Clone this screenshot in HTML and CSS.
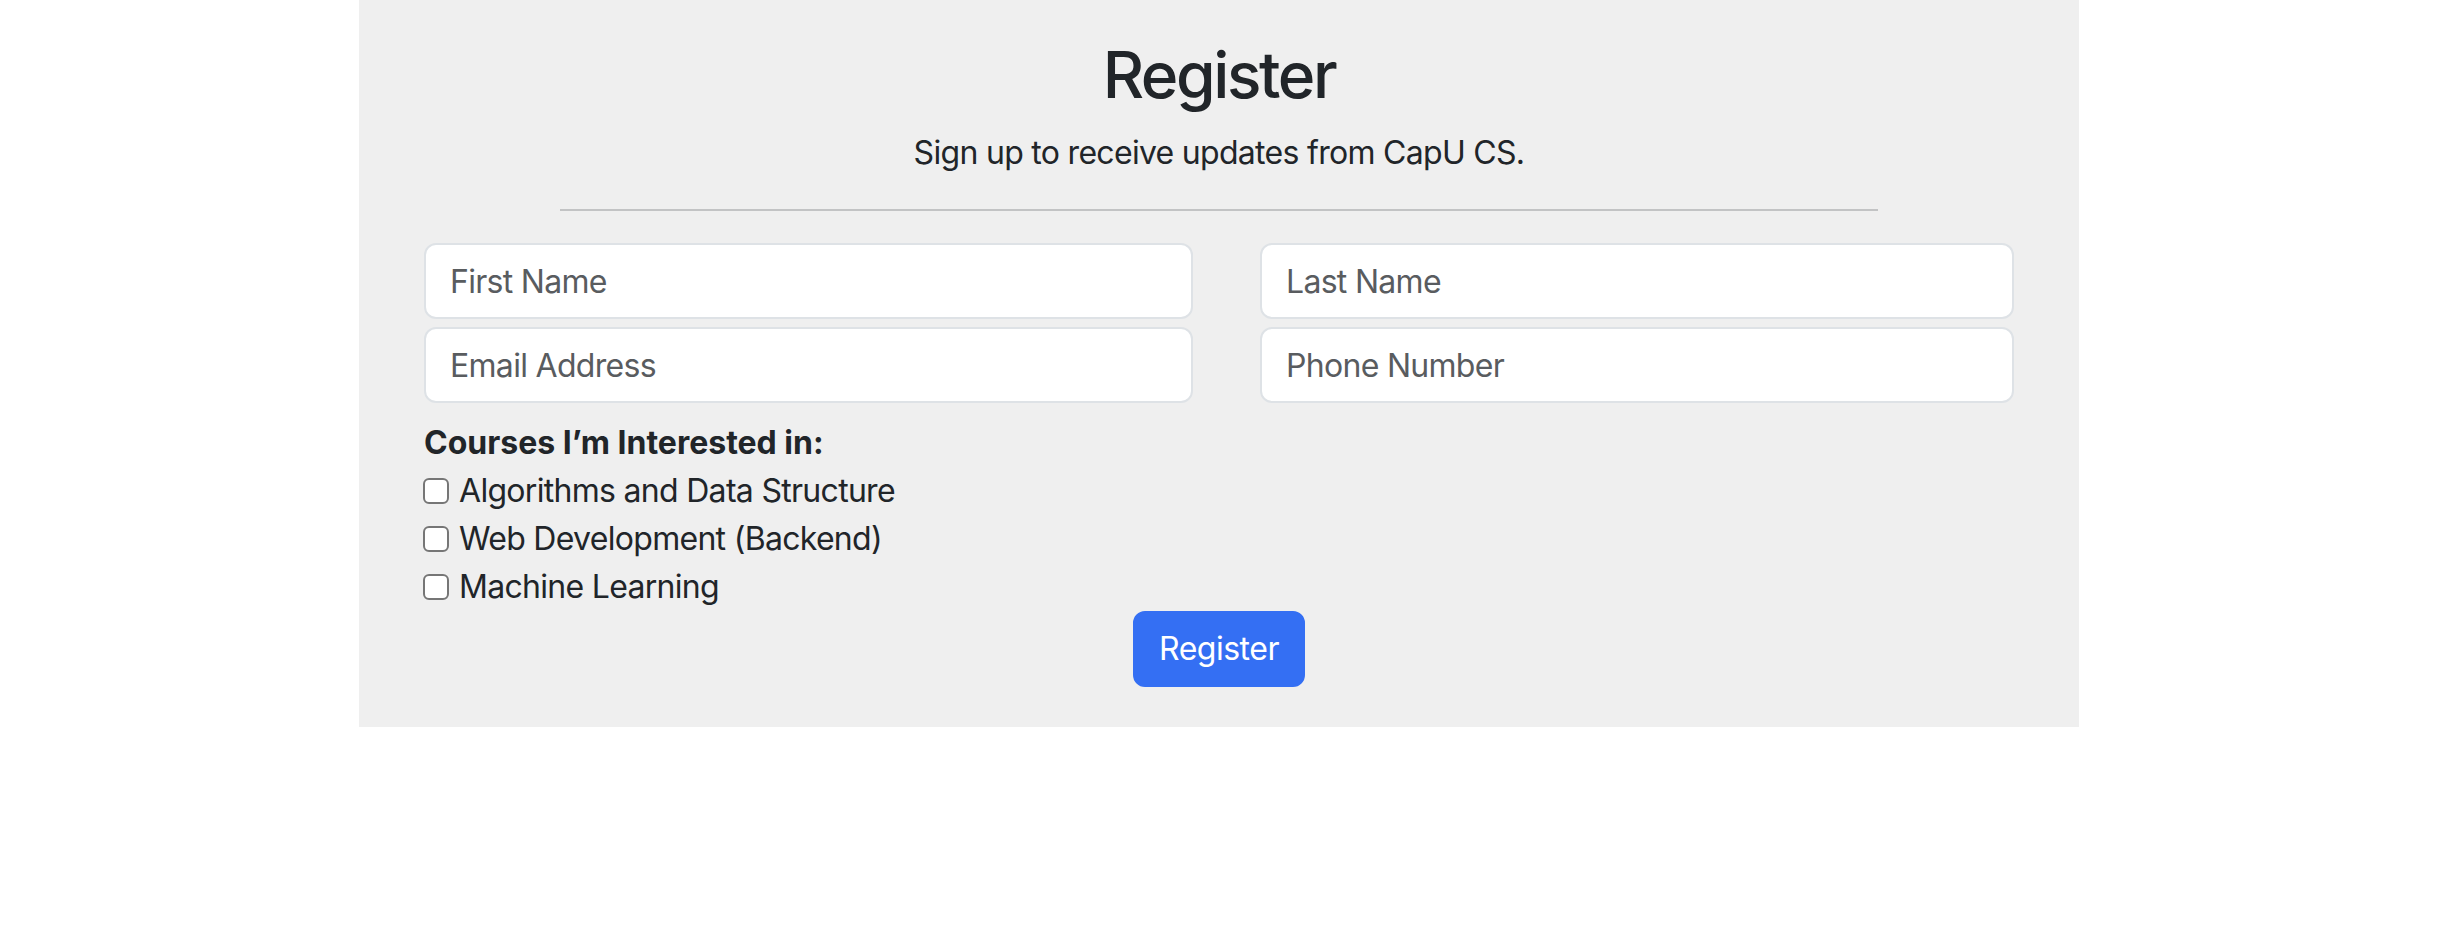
FILE: index.html
```html
<!DOCTYPE html>
<html lang="en">
<head>
<meta charset="utf-8">
<title>Register</title>
<link rel="stylesheet" href="styles.css">
</head>
<body>
<main class="card">
  <h2 class="title">Register</h2>
  <p class="subtitle">Sign up to receive updates from CapU CS.</p>
  <hr class="divider">
  <form class="form">
    <div class="fields">
      <input class="field" type="text" placeholder="First Name">
      <input class="field" type="text" placeholder="Last Name">
      <input class="field" type="email" placeholder="Email Address">
      <input class="field" type="tel" placeholder="Phone Number">
    </div>
    <div class="courses">
      <div class="courses-title">Courses I’m Interested in:</div>
      <label class="course"><input class="check" type="checkbox"><span>Algorithms and Data Structure</span></label>
      <label class="course"><input class="check" type="checkbox"><span>Web Development (Backend)</span></label>
      <label class="course"><input class="check" type="checkbox"><span>Machine Learning</span></label>
    </div>
    <div class="actions">
      <button class="btn" type="button">Register</button>
    </div>
  </form>
</main>
</body>
</html>
```

FILE: styles.css
```css
html, body {
  margin: 0;
  padding: 0;
  background: #ffffff;
}

body {
  font-family: Inter, "Liberation Sans", sans-serif;
  font-size: 32px;
  line-height: 48px;
  color: #212529;
}

.card {
  width: 1720px;
  margin: 0 auto;
  box-sizing: border-box;
  background: #efefef;
  padding: 36px 65px 40px;
}

.title {
  margin: 0 0 16px;
  text-align: center;
  font-size: 64px;
  line-height: 77px;
  font-weight: 500;
  letter-spacing: -2.4px;
}

.subtitle {
  margin: 0 0 32px;
  text-align: center;
  letter-spacing: -0.7px;
}

.divider {
  width: 1318px;
  margin: 0 auto 32px;
  border: 0;
  border-top: 2px solid #c2c3c4;
  height: 0;
}

.form {
  display: flex;
  flex-direction: column;
}

.fields {
  display: grid;
  grid-template-columns: 769px 754px;
  column-gap: 67px;
  row-gap: 8px;
}

.field {
  box-sizing: border-box;
  height: 76px;
  padding: 12px 24px;
  border: 2px solid #dee2e6;
  border-radius: 12px;
  background: #ffffff;
  font-family: inherit;
  font-size: 32px;
  line-height: 48px;
  color: #212529;
  letter-spacing: -0.7px;
  outline: none;
}

.field::placeholder {
  color: #595c5f;
  opacity: 1;
}

.courses {
  margin-top: 16px;
  display: flex;
  flex-direction: column;
}

.courses-title {
  font-weight: 700;
  letter-spacing: 0;
}

.course {
  display: flex;
  align-items: center;
  gap: 10px;
  letter-spacing: -0.7px;
}

.check {
  appearance: none;
  -webkit-appearance: none;
  box-sizing: border-box;
  width: 26px;
  height: 26px;
  margin: 0 0 0 -1px;
  border: 2px solid #767676;
  border-radius: 6px;
  background: #ffffff;
}

.actions {
  display: flex;
  justify-content: center;
}

.btn {
  box-sizing: border-box;
  height: 76px;
  width: 172px;
  padding: 12px 24px;
  border: 2px solid #346ff3;
  border-radius: 12px;
  background: #346ff3;
  color: #ffffff;
  font-family: inherit;
  font-size: 32px;
  line-height: 48px;
  font-weight: 400;
  letter-spacing: -0.5px;
}
```
